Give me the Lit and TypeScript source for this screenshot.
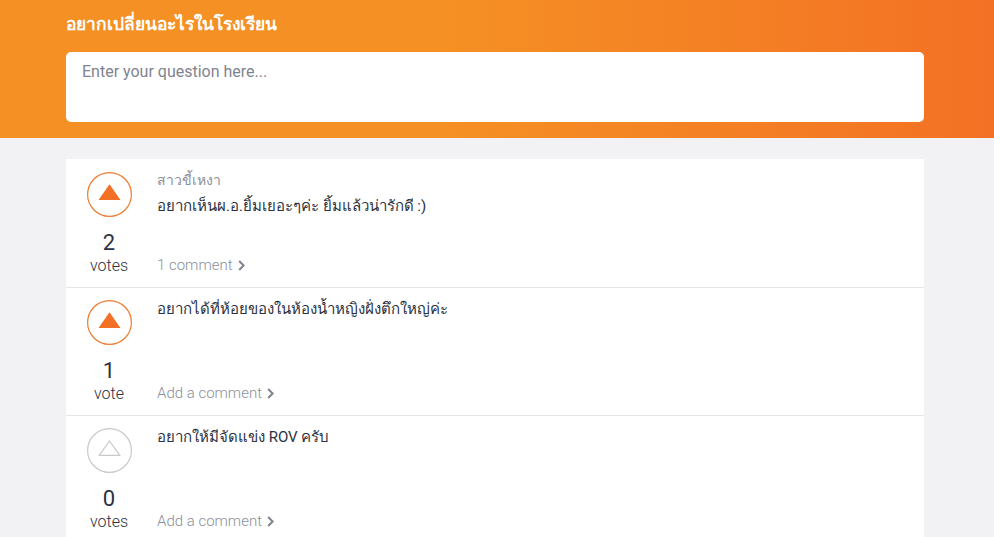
import { LitElement, html, svg, css } from 'lit';
import { customElement } from 'lit/decorators.js';

interface Question {
  author?: string;
  text: string;
  votes: number;
  comments: string;
  voted: boolean;
}

const questions: Question[] = [
  {
    author: 'สาวขี้เหงา',
    text: 'อยากเห็นผ.อ.ยิ้มเยอะๆค่ะ ยิ้มแล้วน่ารักดี :)',
    votes: 2,
    comments: '1 comment',
    voted: true,
  },
  {
    text: 'อยากได้ที่ห้อยของในห้องน้ำหญิงฝั่งตึกใหญ่ค่ะ',
    votes: 1,
    comments: 'Add a comment',
    voted: true,
  },
  {
    text: 'อยากให้มีจัดแข่ง ROV ครับ',
    votes: 0,
    comments: 'Add a comment',
    voted: false,
  },
];

@customElement('app-root')
export class AppRoot extends LitElement {
  static styles = css`
    :host {
      display: block;
      height: 537px;
      overflow: hidden;
      background: #f2f2f4;
      font-family: Roboto, 'Noto Sans', 'DejaVu Sans', sans-serif;
      color: #2c3242;
    }

    .header {
      height: 138px;
      box-sizing: border-box;
      padding: 12px 70px 16px 66px;
      background: linear-gradient(90deg, #f59024 0%, #f59024 45%, #f37124 100%);
    }

    .title {
      font-size: 17.4px;
      line-height: 24px;
      font-weight: 600;
      color: #fff;
    }

    .input {
      margin-top: 16px;
      height: 70px;
      box-sizing: border-box;
      padding: 10px 16px;
      background: #fff;
      border-radius: 5px;
      font-size: 16px;
      line-height: 20px;
      color: #7f8490;
    }

    .list {
      margin: 21px 70px 0 66px;
      display: flex;
      flex-direction: column;
      gap: 1px;
      background: #e6e6e8;
    }

    .row {
      display: flex;
      height: 127px;
      box-sizing: border-box;
      background: #fff;
    }

    .row:first-child {
      height: 128px;
    }

    .vote {
      width: 86px;
      margin-right: 5px;
      flex: none;
      display: flex;
      flex-direction: column;
      align-items: center;
      padding-top: 12px;
      box-sizing: border-box;
    }

    .row:first-child .vote {
      padding-top: 13px;
    }

    .circle {
      display: block;
      width: 45px;
      height: 45px;
    }

    .count {
      margin-top: 14px;
      font-size: 22px;
      line-height: 24px;
    }

    .unit {
      font-size: 16px;
      line-height: 22px;
      font-weight: 300;
    }

    .body {
      flex: 1;
      display: flex;
      flex-direction: column;
      padding: 10px 0 11px;
    }

    .author {
      font-size: 14px;
      line-height: 22px;
      color: #8b8f99;
    }

    .text {
      font-size: 15px;
      line-height: 22px;
    }

    .author + .text {
      margin-top: 4px;
    }

    .comments {
      margin-top: auto;
      display: flex;
      align-items: center;
      gap: 5px;
      font-size: 15px;
      line-height: 22px;
      font-weight: 300;
      color: #8b8f99;
    }

    .chevron {
      display: block;
      width: 7px;
      height: 11px;
    }
  `;

  private renderArrow(voted: boolean) {
    const color = voted ? '#ee7a2e' : '#c9c9c9';
    return html`
      <svg class="circle" viewBox="0 0 45 45">
        <circle cx="22.5" cy="22.5" r="21.9" fill="none" stroke=${color} stroke-width="1.2"></circle>
        ${voted
          ? svg`<path d="M11.5 28 L22.5 12.3 L33.5 28 Z" fill="#f37124"></path>`
          : svg`<path d="M12.2 27.3 L22.5 13 L32.8 27.3 Z" fill="none" stroke=${color} stroke-width="1.2"></path>`}
      </svg>
    `;
  }

  render() {
    return html`
      <div class="header">
        <div class="title">อยากเปลี่ยนอะไรในโรงเรียน</div>
        <div class="input">Enter your question here...</div>
      </div>
      <div class="list">
        ${questions.map(
          (q) => html`
            <div class="row">
              <div class="vote">
                ${this.renderArrow(q.voted)}
                <div class="count">${q.votes}</div>
                <div class="unit">${q.votes === 1 ? 'vote' : 'votes'}</div>
              </div>
              <div class="body">
                ${q.author ? html`<div class="author">${q.author}</div>` : ''}
                <div class="text">${q.text}</div>
                <div class="comments">
                  ${q.comments}
                  <svg class="chevron" viewBox="0 0 7 11">
                    <path d="M1.2 1 L5.6 5.5 L1.2 10" fill="none" stroke="#7f8490" stroke-width="2"></path>
                  </svg>
                </div>
              </div>
            </div>
          `
        )}
      </div>
    `;
  }
}
